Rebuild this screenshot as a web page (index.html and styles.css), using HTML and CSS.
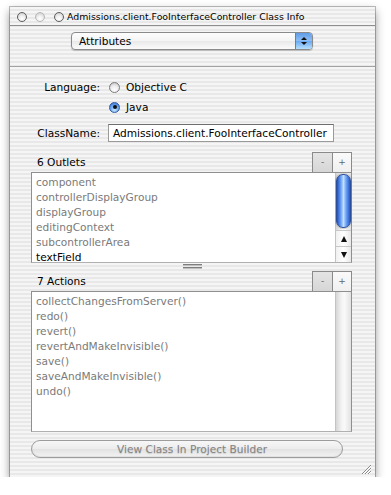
FILE: index.html
```html
<!DOCTYPE html>
<html lang="en">
<head>
    <meta charset="UTF-8">
    <title>Class Info</title>
    <link rel="stylesheet" href="styles.css">
</head>
<body>
    <div class="window">
        <div class="titlebar">
            <span class="light"></span>
            <span class="light dim"></span>
            <span class="light last"></span>
            <span class="title">Admissions.client.FooInterfaceController Class Info</span>
        </div>

        <div class="toolbar">
            <div class="popup">
                <span class="popup-label">Attributes</span>
                <span class="popup-arrows"><i class="up"></i><i class="down"></i></span>
            </div>
        </div>

        <div class="form">
            <div class="row">
                <span class="label">Language:</span>
                <span class="radio"><span class="dot"></span>Objective C</span>
            </div>
            <div class="row">
                <span class="label"></span>
                <span class="radio"><span class="dot on"></span>Java</span>
            </div>
            <div class="row field-row">
                <span class="label">ClassName:</span>
                <span class="field">Admissions.client.FooInterfaceController</span>
            </div>
        </div>

        <div class="section">
            <div class="section-head">
                <span>6 Outlets</span>
                <span class="pm">
                    <span class="pm-btn minus">-</span><span class="pm-btn">+</span>
                </span>
            </div>
            <div class="list outlets">
                <ul>
                    <li>component</li>
                    <li>controllerDisplayGroup</li>
                    <li>displayGroup</li>
                    <li>editingContext</li>
                    <li>subcontrollerArea</li>
                    <li class="active">textField</li>
                </ul>
                <div class="scrollbar">
                    <div class="thumb"></div>
                    <div class="arrows">
                        <span class="arrow"><i class="up"></i></span>
                        <span class="arrow"><i class="down"></i></span>
                    </div>
                </div>
            </div>
        </div>

        <div class="splitter"><span></span><span></span></div>

        <div class="section">
            <div class="section-head">
                <span>7 Actions</span>
                <span class="pm">
                    <span class="pm-btn minus">-</span><span class="pm-btn">+</span>
                </span>
            </div>
            <div class="list actions">
                <ul>
                    <li>collectChangesFromServer()</li>
                    <li>redo()</li>
                    <li>revert()</li>
                    <li>revertAndMakeInvisible()</li>
                    <li>save()</li>
                    <li>saveAndMakeInvisible()</li>
                    <li>undo()</li>
                </ul>
                <div class="scrollbar"></div>
            </div>
        </div>

        <div class="footer">
            <div class="pill">View Class In Project Builder</div>
        </div>

        <svg class="grip" width="11" height="11" viewBox="0 0 11 11">
            <path d="M1 10 L10 1 M4 10 L10 4 M7 10 L10 7" stroke="#8a8a8a" stroke-width="1"/>
            <path d="M2 10 L10 2 M5 10 L10 5 M8 10 L10 8" stroke="#fff" stroke-width="1"/>
        </svg>
    </div>
</body>
</html>
```

FILE: styles.css
```css
* {
    margin: 0;
    padding: 0;
    box-sizing: border-box;
}

body {
    background: #fff;
    font-family: "DejaVu Sans", Verdana, sans-serif;
    font-size: 10.6px;
    color: #000;
    overflow: hidden;
}

.window {
    position: relative;
    width: 365px;
    height: 470px;
    margin: 7px 0 0 10px;
    background: repeating-linear-gradient(to bottom, #f5f5f5 0, #f5f5f5 2px, #e8e8e8 2px, #e8e8e8 4px);
    box-shadow: 0 0 0 1px rgba(0, 0, 0, 0.25), 0 4px 9px rgba(0, 0, 0, 0.45);
}

/* title bar */
.titlebar {
    height: 19px;
    display: flex;
    align-items: center;
    padding-left: 7px;
    border-bottom: 1px solid #8e8e8e;
}

.light {
    width: 10px;
    height: 10px;
    border-radius: 50%;
    border: 1px solid #5e5e5e;
    background: radial-gradient(circle at 50% 70%, #fff 0, #f0f0f0 40%, #c4c4c4 100%);
    margin-right: 8px;
    margin-top: 1px;
}

.light.dim {
    border-color: #b8b8b8;
    margin-right: 9px;
}

.light.last {
    margin-right: 3px;
}

.title {
    font-size: 9.4px;
    padding-top: 1px;
}

/* popup */
.toolbar {
    height: 41px;
    padding: 6px 0 0 61px;
    border-bottom: 1px solid #a2a2a2;
}

.popup {
    width: 242px;
    height: 18px;
    display: flex;
    border: 1px solid #8a8a8a;
    border-radius: 4px;
    background: linear-gradient(to bottom, #fdfdfd, #f4f4f4 50%, #e9e9e9 51%, #fbfbfb);
    box-shadow: 0 1px 1px rgba(0, 0, 0, 0.2);
    overflow: hidden;
}

.popup-label {
    flex: 1;
    padding-left: 7px;
    line-height: 16px;
}

.popup-arrows {
    width: 17px;
    display: flex;
    flex-direction: column;
    align-items: center;
    justify-content: center;
    gap: 2px;
    border-left: 1px solid #5680c8;
    background: linear-gradient(to bottom, #5f9be6, #8fc0f6 50%, #6aa8f0 51%, #b6e0ff);
}

.up, .down {
    display: block;
    width: 0;
    height: 0;
    border-left: 3px solid transparent;
    border-right: 3px solid transparent;
}

.up {
    border-bottom: 3px solid #111;
}

.down {
    border-top: 3px solid #111;
}

/* form */
.form {
    padding-top: 10px;
}

.row {
    display: grid;
    grid-template-columns: 90px 1fr;
    column-gap: 8px;
    height: 20px;
    align-items: center;
}

.label {
    text-align: right;
}

.radio {
    display: flex;
    align-items: center;
    gap: 6px;
    padding-left: 1px;
}

.dot {
    width: 11px;
    height: 11px;
    border-radius: 50%;
    border: 1px solid #7b7b7b;
    background: radial-gradient(circle at 50% 75%, #fff 0, #eee 45%, #bdbdbd 100%);
    display: flex;
    align-items: center;
    justify-content: center;
}

.dot.on {
    border-color: #2e5aa8;
    background: radial-gradient(circle at 50% 75%, #c8e6ff 0, #6ea8ee 50%, #2f66c8 100%);
}

.dot.on::after {
    content: "";
    width: 4px;
    height: 4px;
    border-radius: 50%;
    background: #111;
}

.field-row {
    margin-top: 7px;
    height: 18px;
}

.field {
    width: 226px;
    height: 18px;
    background: #fff;
    border: 1px solid #9a9a9a;
    border-top-color: #6e6e6e;
    padding-left: 4px;
    line-height: 16px;
    white-space: nowrap;
}

/* outlets / actions */
.section {
    padding: 0 23px 0 21px;
}

.form + .section {
    margin-top: 10px;
}

.section-head {
    height: 20px;
    display: flex;
    align-items: center;
    justify-content: space-between;
    padding-left: 6px;
}

.pm {
    display: flex;
    align-self: stretch;
}

.pm-btn {
    width: 20px;
    height: 20px;
    border: 1px solid #8a8a8a;
    border-bottom: none;
    background: linear-gradient(to bottom, #fafafa, #f0f0f0);
    color: #666;
    font-size: 9px;
    text-align: center;
    line-height: 18px;
}

.pm-btn.minus {
    background: linear-gradient(to bottom, #e4e4e4, #d6d6d6);
    border-right: none;
}

.list {
    display: flex;
    background: #fff;
    border: 1px solid #8f8f8f;
    border-bottom-color: #b0b0b0;
}

.list ul {
    flex: 1;
    list-style: none;
    padding: 2px 0 0 4px;
    color: #7a7a7a;
    overflow: hidden;
}

.list li {
    height: 15px;
    line-height: 15px;
    white-space: nowrap;
}

.list li.active {
    color: #000;
}

.outlets {
    height: 91px;
}

.actions {
    height: 141px;
}

.scrollbar {
    width: 16px;
    display: flex;
    flex-direction: column;
    border-left: 1px solid #c4c4c4;
    background: linear-gradient(to right, #d6d6d6, #f2f2f2 35%, #fafafa 55%, #e2e2e2);
}

.thumb {
    margin: 1px 0 0 0;
    height: 54px;
    border-radius: 7px;
    border: 1px solid #2c4f9a;
    background: linear-gradient(to right, #1f4fc0, #6ea2f4 30%, #c2e0ff 50%, #6ea2f4 70%, #2458cc);
    box-shadow: 0 0 0 1px rgba(0, 0, 0, 0.15);
}

.arrows {
    margin-top: auto;
}

.arrow {
    height: 16px;
    display: flex;
    align-items: center;
    justify-content: center;
    border-top: 1px solid #c8c8c8;
    background: linear-gradient(to right, #f0f0f0, #fff 50%, #e8e8e8);
}

.arrow .up {
    border-left-width: 3.5px;
    border-right-width: 3.5px;
    border-bottom-width: 6px;
}

.arrow .down {
    border-left-width: 3.5px;
    border-right-width: 3.5px;
    border-top-width: 6px;
}

.splitter {
    height: 8px;
    padding-top: 1px;
    display: flex;
    flex-direction: column;
    align-items: center;
    gap: 2px;
}

.splitter span {
    width: 19px;
    height: 1px;
    background: #7e7e7e;
    box-shadow: 0 1px 0 #c0c0c0;
}

/* bottom button */
.footer {
    padding: 8px 0 0 21px;
}

.pill {
    width: 312px;
    height: 18px;
    border-radius: 9px;
    border: 1px solid #9c9c9c;
    background: linear-gradient(to bottom, #f7f7f7, #ececec 50%, #e2e2e2 51%, #f3f3f3);
    box-shadow: inset 0 -1px 1px rgba(0, 0, 0, 0.08);
    color: #848484;
    text-align: center;
    padding-left: 10px;
    line-height: 16px;
    text-shadow: 0 1px 1px rgba(0, 0, 0, 0.15);
}

.grip {
    position: absolute;
    right: 3px;
    bottom: 2px;
}
```
